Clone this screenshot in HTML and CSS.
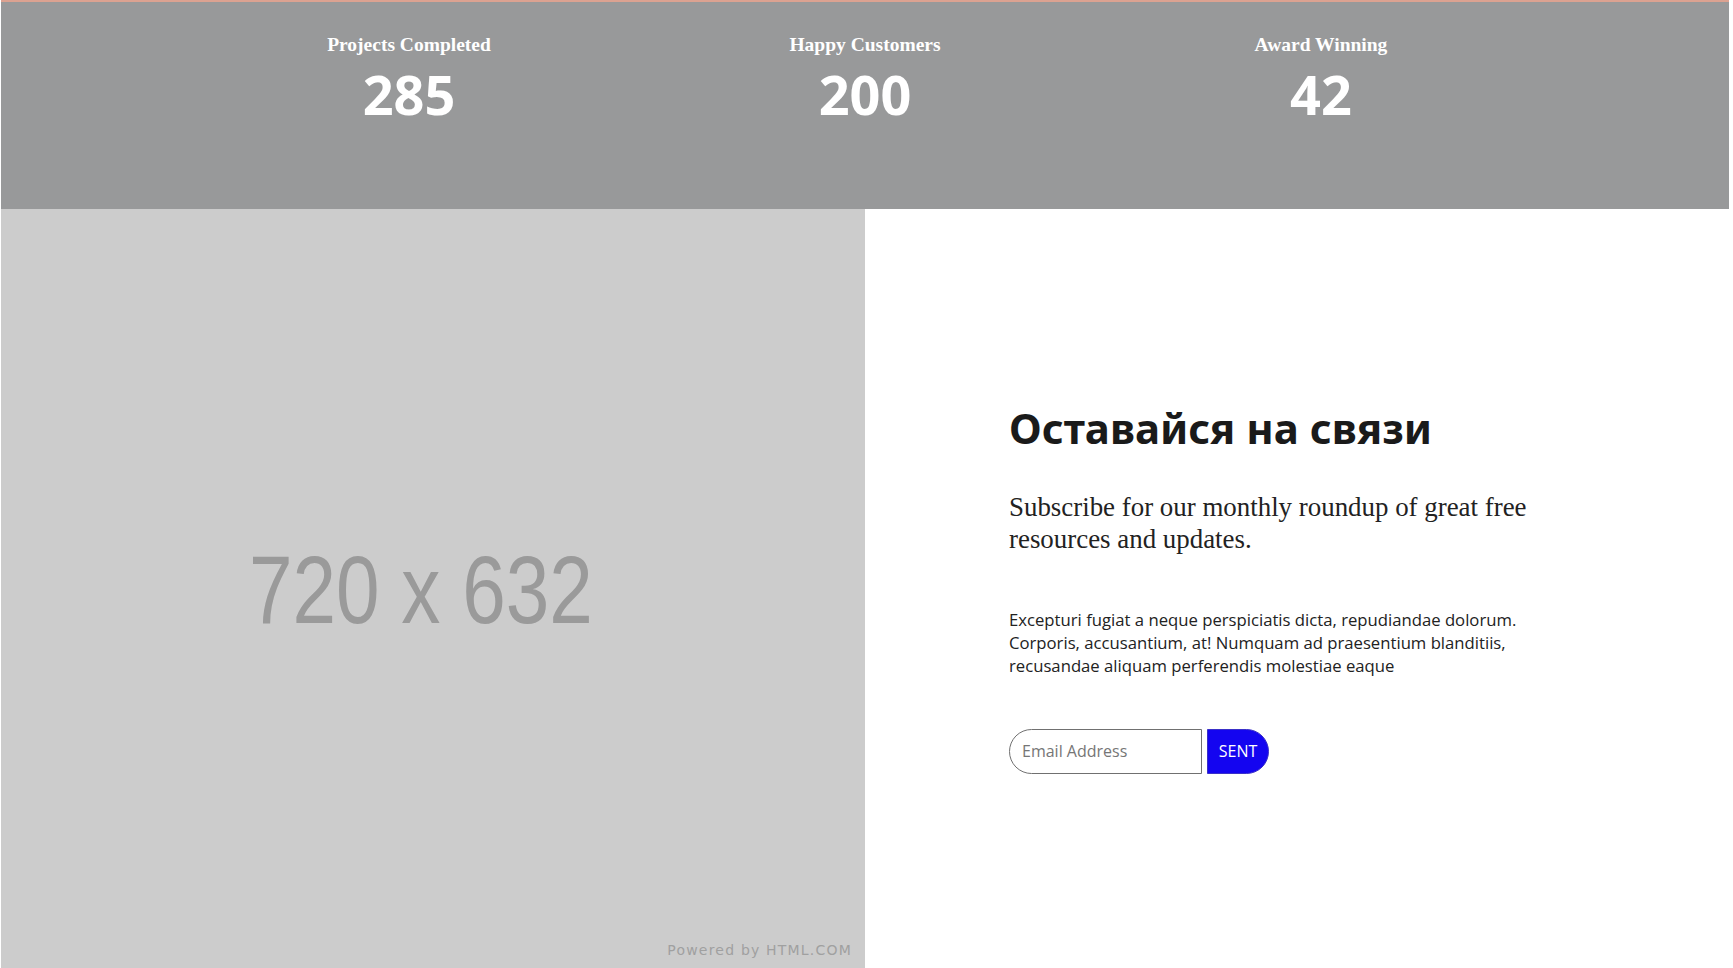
FILE: index.html
```html
<!DOCTYPE html>
<html lang="ru">
<head>
<meta charset="utf-8">
<title>Stats and subscribe</title>
<link rel="stylesheet" href="styles.css">
</head>
<body>
<div class="page">
  <section class="stats">
    <div class="stat">
      <div class="stat-title">Projects Completed</div>
      <div class="stat-num">285</div>
    </div>
    <div class="stat">
      <div class="stat-title">Happy Customers</div>
      <div class="stat-num">200</div>
    </div>
    <div class="stat">
      <div class="stat-title">Award Winning</div>
      <div class="stat-num">42</div>
    </div>
  </section>
  <section class="split">
    <div class="placeholder">
      <span class="ph-size">720 x 632</span>
      <span class="ph-credit">Powered by HTML.COM</span>
    </div>
    <div class="contact">
      <div class="contact-inner">
        <h2 class="contact-title">Оставайся на связи</h2>
        <p class="contact-sub">Subscribe for our monthly roundup of great free resources and updates.</p>
        <p class="contact-text">Excepturi fugiat a neque perspiciatis dicta, repudiandae dolorum. Corporis, accusantium, at! Numquam ad praesentium blanditiis, recusandae aliquam perferendis molestiae eaque</p>
        <form class="subscribe">
          <input class="email" type="email" placeholder="Email Address">
          <button class="send" type="button">SENT</button>
        </form>
      </div>
    </div>
  </section>
</div>
</body>
</html>
```
FILE: styles.css
```css
html, body {
  margin: 0;
  padding: 0;
  background: #ffffff;
}
body {
  font-family: "Open Sans", "Liberation Sans", sans-serif;
  color: #222;
}
.page {
  width: 1728px;
  padding-left: 1px;
}
.stats {
  box-sizing: border-box;
  height: 209px;
  border-top: 2px solid #dca291;
  background: #98999a;
  display: flex;
  justify-content: center;
  padding-top: 30px;
}
.stat {
  width: 456px;
  text-align: center;
  color: #fff;
}
.stat-title {
  font-family: "Liberation Serif", "DejaVu Serif", serif;
  font-weight: 700;
  font-size: 19.5px;
  line-height: 26px;
}
.stat-num {
  font-family: "Open Sans", sans-serif;
  font-weight: 700;
  font-size: 54px;
  line-height: 60px;
  margin-top: 6px;
}
.split {
  display: grid;
  grid-template-columns: 864px 864px;
  height: 759px;
}
.placeholder {
  position: relative;
  background: #cccccc;
  display: flex;
  align-items: center;
  justify-content: center;
}
.ph-size {
  display: inline-block;
  font-family: "Liberation Sans", Arial, sans-serif;
  font-size: 96px;
  color: #9a9a9a;
  transform: scaleX(0.815);
  margin-right: 24px;
  margin-top: 2px;
}
.ph-credit {
  position: absolute;
  right: 13px;
  bottom: 10px;
  font-family: "DejaVu Sans", sans-serif;
  font-size: 14px;
  letter-spacing: 1.2px;
  color: #a0a0a0;
}
.contact {
  display: flex;
  align-items: center;
  padding-left: 144px;
}
.contact-inner {
  width: 545px;
}
.contact-title {
  margin: 0 0 37px;
  font-family: "Noto Sans", "Open Sans", sans-serif;
  font-weight: 700;
  font-size: 42px;
  line-height: 1.2;
  color: #1a1a1a;
}
.contact-sub {
  margin: 0 0 53px;
  font-family: "Liberation Serif", serif;
  font-size: 26.9px;
  line-height: 32px;
  color: #222;
}
.contact-text {
  margin: 0 0 52px;
  font-size: 16.7px;
  line-height: 23px;
  color: #222;
}
.subscribe {
  display: flex;
  gap: 5px;
  margin: 0;
}
.email {
  box-sizing: border-box;
  width: 193px;
  height: 45px;
  border: 1px solid #707070;
  border-radius: 23px 0 0 23px;
  padding: 0 12px;
  font-family: "Open Sans", sans-serif;
  font-size: 16px;
  color: #333;
  background: #fff;
  outline: none;
}
.email::placeholder {
  color: #767676;
}
.send {
  box-sizing: border-box;
  width: 62px;
  height: 45px;
  border: 1px solid #3a30c8;
  border-radius: 0 23px 23px 0;
  background: #1405f0;
  color: #fff;
  font-family: "Open Sans", sans-serif;
  font-size: 16px;
  padding: 0;
  cursor: pointer;
}
```
